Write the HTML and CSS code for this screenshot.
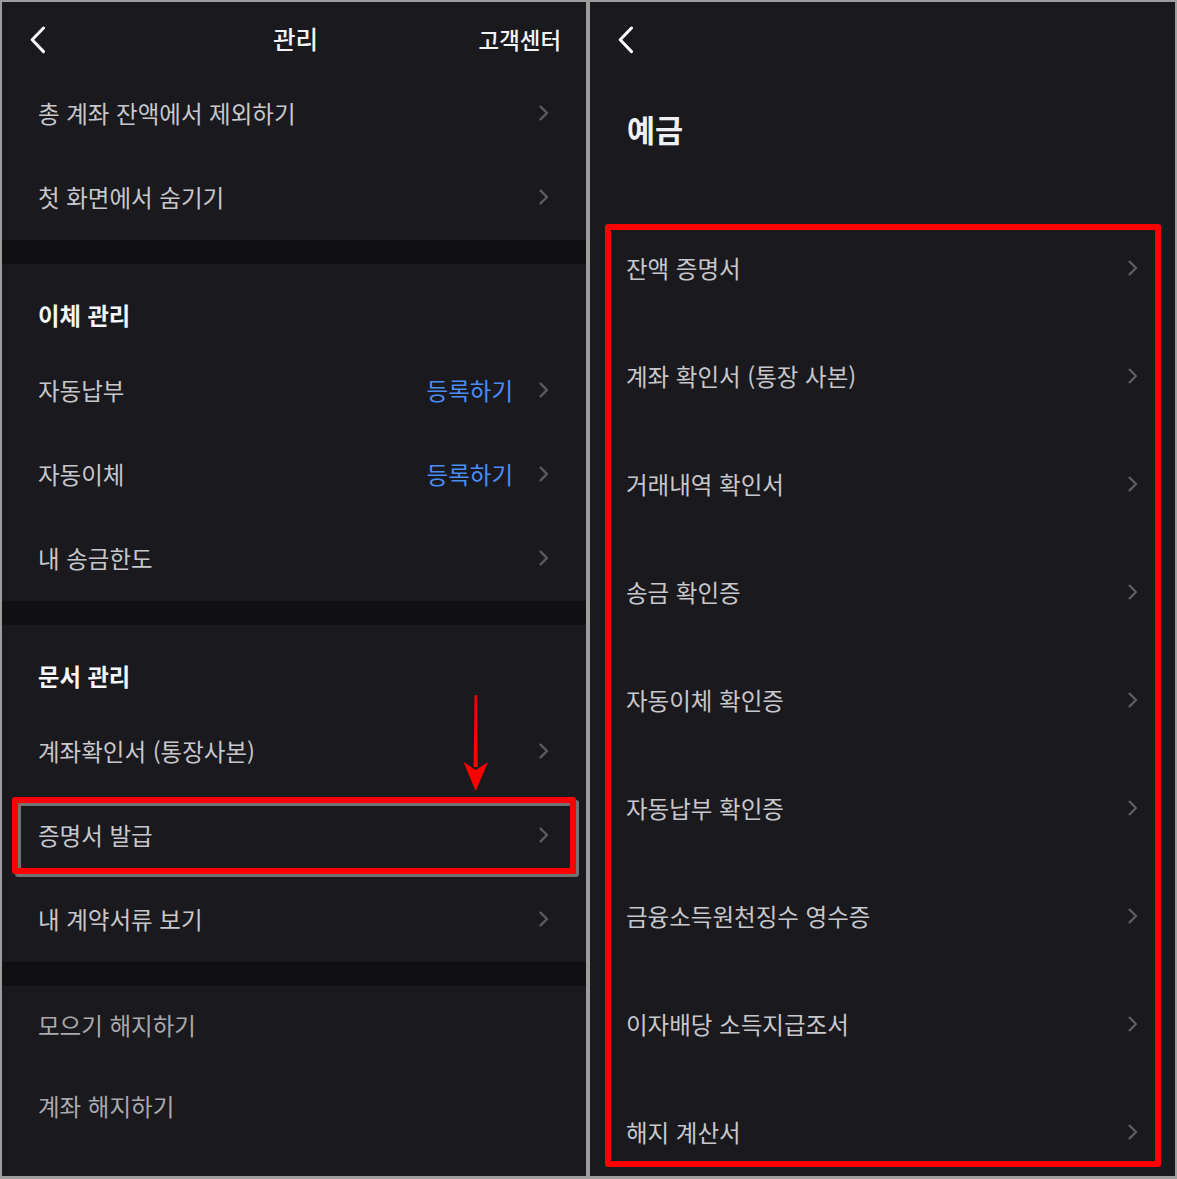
FILE: index.html
```html
<!DOCTYPE html>
<html lang="ko">
<head>
<meta charset="utf-8">
<title>관리 / 예금</title>
<link rel="stylesheet" href="styles.css">
</head>
<body>
<div class="frame">
  <div class="screen">
    <header class="topbar">
      <span class="back"><svg width="16" height="28" viewBox="0 0 16 28"><path d="M13.5 2 L2.2 13.8 L13.5 25.6" fill="none" stroke="#fff" stroke-width="3" stroke-linecap="round" stroke-linejoin="round"/></svg></span>
      <h1 class="title">관리</h1>
      <span class="help">고객센터</span>
    </header>

    <div class="group">
      <div class="row"><span class="label">총 계좌 잔액에서 제외하기</span><svg class="chev" width="10" height="16" viewBox="0 0 10 16"><path d="M1.6 1.6 L8 8 L1.6 14.4" fill="none" stroke="#5c5c64" stroke-width="2.3" stroke-linecap="round" stroke-linejoin="round"/></svg></div>
      <div class="row"><span class="label">첫 화면에서 숨기기</span><svg class="chev" width="10" height="16" viewBox="0 0 10 16"><path d="M1.6 1.6 L8 8 L1.6 14.4" fill="none" stroke="#5c5c64" stroke-width="2.3" stroke-linecap="round" stroke-linejoin="round"/></svg></div>
    </div>
    <div class="band"></div>

    <div class="group">
      <h2 class="section">이체 관리</h2>
      <div class="row"><span class="label">자동납부</span><span class="end"><span class="link">등록하기</span><svg class="chev" width="10" height="16" viewBox="0 0 10 16"><path d="M1.6 1.6 L8 8 L1.6 14.4" fill="none" stroke="#5c5c64" stroke-width="2.3" stroke-linecap="round" stroke-linejoin="round"/></svg></span></div>
      <div class="row"><span class="label">자동이체</span><span class="end"><span class="link">등록하기</span><svg class="chev" width="10" height="16" viewBox="0 0 10 16"><path d="M1.6 1.6 L8 8 L1.6 14.4" fill="none" stroke="#5c5c64" stroke-width="2.3" stroke-linecap="round" stroke-linejoin="round"/></svg></span></div>
      <div class="row"><span class="label">내 송금한도</span><svg class="chev" width="10" height="16" viewBox="0 0 10 16"><path d="M1.6 1.6 L8 8 L1.6 14.4" fill="none" stroke="#5c5c64" stroke-width="2.3" stroke-linecap="round" stroke-linejoin="round"/></svg></div>
    </div>
    <div class="band"></div>

    <div class="group">
      <h2 class="section">문서 관리</h2>
      <div class="row"><span class="label">계좌확인서 (통장사본)</span><svg class="chev" width="10" height="16" viewBox="0 0 10 16"><path d="M1.6 1.6 L8 8 L1.6 14.4" fill="none" stroke="#5c5c64" stroke-width="2.3" stroke-linecap="round" stroke-linejoin="round"/></svg></div>
      <div class="row"><span class="label">증명서 발급</span><svg class="chev" width="10" height="16" viewBox="0 0 10 16"><path d="M1.6 1.6 L8 8 L1.6 14.4" fill="none" stroke="#5c5c64" stroke-width="2.3" stroke-linecap="round" stroke-linejoin="round"/></svg></div>
      <div class="row"><span class="label">내 계약서류 보기</span><svg class="chev" width="10" height="16" viewBox="0 0 10 16"><path d="M1.6 1.6 L8 8 L1.6 14.4" fill="none" stroke="#5c5c64" stroke-width="2.3" stroke-linecap="round" stroke-linejoin="round"/></svg></div>
    </div>
    <div class="band"></div>

    <div class="group">
      <div class="row short"><span class="label dim">모으기 해지하기</span></div>
      <div class="row short"><span class="label dim">계좌 해지하기</span></div>
    </div>

    <div class="mark mark-left"></div>
    <svg class="arrow" width="26" height="97" viewBox="0 0 26 97">
      <polygon points="11.6,0 13.8,0 14.8,72 10.6,72" fill="#ff0000"/>
      <polygon points="0.5,67 12.7,75 25,67 12.7,96" fill="#ff0000"/>
    </svg>
  </div>

  <div class="screen">
    <header class="topbar">
      <span class="back"><svg width="16" height="28" viewBox="0 0 16 28"><path d="M13.5 2 L2.2 13.8 L13.5 25.6" fill="none" stroke="#fff" stroke-width="3" stroke-linecap="round" stroke-linejoin="round"/></svg></span>
    </header>
    <h1 class="page-title">예금</h1>
    <div class="group">
      <div class="row tall"><span class="label">잔액 증명서</span><svg class="chev" width="10" height="16" viewBox="0 0 10 16"><path d="M1.6 1.6 L8 8 L1.6 14.4" fill="none" stroke="#5c5c64" stroke-width="2.3" stroke-linecap="round" stroke-linejoin="round"/></svg></div>
      <div class="row tall"><span class="label">계좌 확인서 (통장 사본)</span><svg class="chev" width="10" height="16" viewBox="0 0 10 16"><path d="M1.6 1.6 L8 8 L1.6 14.4" fill="none" stroke="#5c5c64" stroke-width="2.3" stroke-linecap="round" stroke-linejoin="round"/></svg></div>
      <div class="row tall"><span class="label">거래내역 확인서</span><svg class="chev" width="10" height="16" viewBox="0 0 10 16"><path d="M1.6 1.6 L8 8 L1.6 14.4" fill="none" stroke="#5c5c64" stroke-width="2.3" stroke-linecap="round" stroke-linejoin="round"/></svg></div>
      <div class="row tall"><span class="label">송금 확인증</span><svg class="chev" width="10" height="16" viewBox="0 0 10 16"><path d="M1.6 1.6 L8 8 L1.6 14.4" fill="none" stroke="#5c5c64" stroke-width="2.3" stroke-linecap="round" stroke-linejoin="round"/></svg></div>
      <div class="row tall"><span class="label">자동이체 확인증</span><svg class="chev" width="10" height="16" viewBox="0 0 10 16"><path d="M1.6 1.6 L8 8 L1.6 14.4" fill="none" stroke="#5c5c64" stroke-width="2.3" stroke-linecap="round" stroke-linejoin="round"/></svg></div>
      <div class="row tall"><span class="label">자동납부 확인증</span><svg class="chev" width="10" height="16" viewBox="0 0 10 16"><path d="M1.6 1.6 L8 8 L1.6 14.4" fill="none" stroke="#5c5c64" stroke-width="2.3" stroke-linecap="round" stroke-linejoin="round"/></svg></div>
      <div class="row tall"><span class="label">금융소득원천징수 영수증</span><svg class="chev" width="10" height="16" viewBox="0 0 10 16"><path d="M1.6 1.6 L8 8 L1.6 14.4" fill="none" stroke="#5c5c64" stroke-width="2.3" stroke-linecap="round" stroke-linejoin="round"/></svg></div>
      <div class="row tall"><span class="label">이자배당 소득지급조서</span><svg class="chev" width="10" height="16" viewBox="0 0 10 16"><path d="M1.6 1.6 L8 8 L1.6 14.4" fill="none" stroke="#5c5c64" stroke-width="2.3" stroke-linecap="round" stroke-linejoin="round"/></svg></div>
      <div class="row tall"><span class="label">해지 계산서</span><svg class="chev" width="10" height="16" viewBox="0 0 10 16"><path d="M1.6 1.6 L8 8 L1.6 14.4" fill="none" stroke="#5c5c64" stroke-width="2.3" stroke-linecap="round" stroke-linejoin="round"/></svg></div>
    </div>
    <div class="mark mark-right"></div>
  </div>
</div>
</body>
</html>
```

FILE: styles.css
```css
* { box-sizing: border-box; }

html, body {
  margin: 0;
  padding: 0;
}

body {
  width: 1177px;
  height: 1179px;
  overflow: hidden;
  background: #9d9d9d;
  font-family: "Noto Sans CJK KR", "Noto Sans", sans-serif;
}

.frame {
  display: flex;
  gap: 4px;
  width: 1177px;
  height: 1179px;
  padding: 2px 2px 3px 2px;
}

.screen {
  position: relative;
  flex: 1;
  height: 100%;
  overflow: hidden;
  background: #19191e;
}

.screen:first-child {
  flex: 0 0 584px;
}

.topbar {
  display: grid;
  grid-template-columns: 1fr auto 1fr;
  align-items: center;
  height: 70px;
  padding: 4px 25px 0 28px;
}

.back {
  display: flex;
  align-items: center;
  justify-self: start;
  margin-top: 2px;
}

.title {
  margin: 0;
  font-size: 24.5px;
  font-weight: 500;
  line-height: 30px;
  color: #f4f4f6;
}

.help {
  justify-self: end;
  font-size: 22.4px;
  font-weight: 500;
  line-height: 30px;
  color: #f4f4f6;
}

.group {
  display: flex;
  flex-direction: column;
}

.band {
  height: 24px;
  background: #101013;
}

.section {
  margin: 0;
  height: 85px;
  padding: 37px 36px 0;
  font-size: 23.3px;
  font-weight: 700;
  line-height: 28px;
  color: #f6f6f8;
}

.row {
  display: flex;
  align-items: center;
  justify-content: space-between;
  height: 84px;
  padding: 0 37px 3px 36px;
}

.row.short {
  height: 81px;
}

.row.tall {
  height: 108px;
}

.label {
  font-size: 23.5px;
  line-height: 30px;
  color: #c8c8cc;
}

.label.dim {
  color: #a9a9ae;
}

.end {
  display: flex;
  align-items: center;
  gap: 26px;
}

.link {
  font-size: 23.5px;
  line-height: 30px;
  color: #4a8ef5;
}

.chev {
  display: block;
  flex: none;
}

.page-title {
  margin: 0;
  height: 143px;
  padding: 38px 37px 0;
  font-size: 30.5px;
  font-weight: 700;
  line-height: 38px;
  color: #f0f0f2;
}

.mark {
  position: absolute;
  border: 6px solid #ff0000;
  border-radius: 3px;
}

.mark-left {
  left: 10px;
  top: 795px;
  width: 564px;
  height: 77px;
  box-shadow: 3px 3px 0 #727272, inset 3px 3px 0 #727272;
}

.mark-right {
  left: 15px;
  top: 222px;
  width: 556px;
  height: 943px;
  border-width: 6.5px;
}

.arrow {
  position: absolute;
  left: 461px;
  top: 693px;
}
```
